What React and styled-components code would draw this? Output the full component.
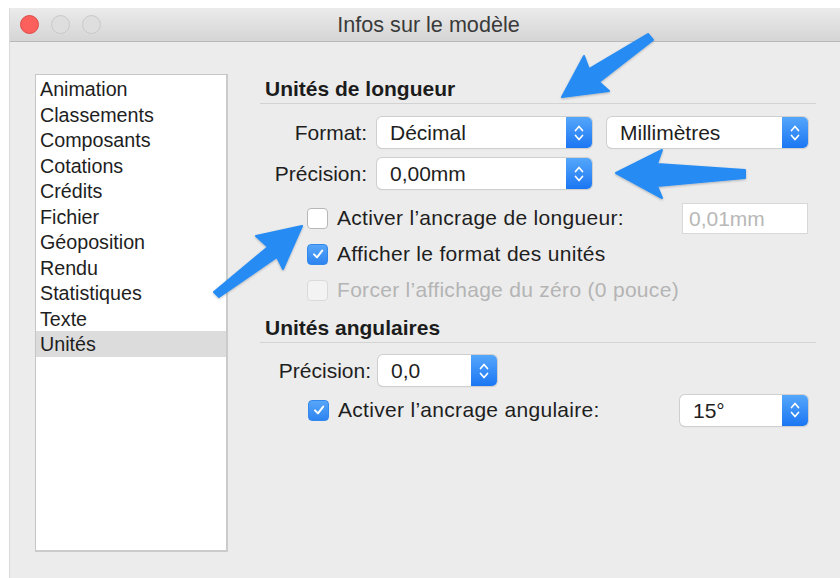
import React from "react";
import styled, { createGlobalStyle } from "styled-components";

const GlobalStyle = createGlobalStyle`
  html, body {
    margin: 0;
    padding: 0;
    background: #ffffff;
    overflow: hidden;
  }
  body {
    font-family: "Liberation Sans", Arial, sans-serif;
    color: #222;
  }
`;

const categories = [
  "Animation",
  "Classements",
  "Composants",
  "Cotations",
  "Crédits",
  "Fichier",
  "Géoposition",
  "Rendu",
  "Statistiques",
  "Texte",
  "Unités",
];

const Stepper = () => (
  <svg width="12" height="20" viewBox="0 0 12 20">
    <path d="M2.5 7.5 L6 3.5 L9.5 7.5" fill="none" stroke="#fff" strokeWidth="1.7" strokeLinecap="round" strokeLinejoin="round" />
    <path d="M2.5 12.5 L6 16.5 L9.5 12.5" fill="none" stroke="#fff" strokeWidth="1.7" strokeLinecap="round" strokeLinejoin="round" />
  </svg>
);

const Check = () => (
  <svg width="14" height="14" viewBox="0 0 14 14">
    <path d="M3 7.4 L6 10.4 L11.2 3.6" fill="none" stroke="#fff" strokeWidth="2" strokeLinecap="round" strokeLinejoin="round" />
  </svg>
);

const Popup = ({ value, width }) => (
  <PopupBox $width={width}>
    <PopupValue>{value}</PopupValue>
    <PopupArrows>
      <Stepper />
    </PopupArrows>
  </PopupBox>
);

const CheckRow = ({ label, checked, disabled, indent, children }) => (
  <CheckLine $indent={indent}>
    <Box $checked={checked} $disabled={disabled}>
      {checked && <Check />}
    </Box>
    <CheckLabel $disabled={disabled}>{label}</CheckLabel>
    {children}
  </CheckLine>
);

// blue callout arrows drawn over the dialog
const Callouts = () => (
  <Overlay viewBox="0 0 840 578">
    <defs>
      <filter id="soft" x="-20%" y="-20%" width="140%" height="140%">
        <feDropShadow dx="0" dy="1" stdDeviation="1.2" floodColor="#000" floodOpacity="0.25" />
      </filter>
    </defs>
    <g fill="#268cf4" stroke="#268cf4" strokeWidth="2" strokeLinejoin="round" filter="url(#soft)">
      <polygon points="562,97 584,56 589,69 648,34 653,40 599,82 609,91" />
      <polygon points="616,173 662,150 657,164 745,170 745,178 657,186 662,198" />
      <polygon points="302,226 256,236 268,247 214,292 219,297 277,257 283,269" />
    </g>
  </Overlay>
);

export default function App() {
  return (
    <>
      <GlobalStyle />
      <Page>
        <Window>
          <TitleBar>
            <Lights>
              <Light $color="#fc605c" $border="#df4a45" />
              <Light $color="#dedede" $border="#c9c9c9" />
              <Light $color="#dedede" $border="#c9c9c9" />
            </Lights>
            <Title>Infos sur le modèle</Title>
            <span />
          </TitleBar>

          <Content>
            <List>
              {categories.map((c) => (
                <ListItem key={c} $selected={c === "Unités"}>
                  {c}
                </ListItem>
              ))}
            </List>

            <Panel>
              <SectionTitle>Unités de longueur</SectionTitle>
              <FormRow $top={13}>
                <FieldLabel $width={107}>Format:</FieldLabel>
                <Popup value="Décimal" width={215} />
                <Gap $w={15} />
                <Popup value="Millimètres" width={201} />
              </FormRow>
              <FormRow $top={10}>
                <FieldLabel $width={107}>Précision:</FieldLabel>
                <Popup value="0,00mm" width={215} />
              </FormRow>

              <Checks $top={11}>
                <CheckRow label="Activer l’ancrage de longueur:" indent={47}>
                  <TextField>0,01mm</TextField>
                </CheckRow>
                <CheckRow label="Afficher le format des unités" checked indent={47} />
                <CheckRow label="Forcer l’affichage du zéro (0 pouce)" disabled indent={47} />
              </Checks>

              <SectionTitle $top={5}>Unités angulaires</SectionTitle>
              <FormRow $top={12}>
                <FieldLabel $width={111} $gap={7}>Précision:</FieldLabel>
                <Popup value="0,0" width={119} />
              </FormRow>
              <Checks $top={6}>
                <CheckRow label="Activer l’ancrage angulaire:" checked indent={48}>
                  <Spacer />
                  <Popup value="15°" width={128} />
                </CheckRow>
              </Checks>
            </Panel>
          </Content>
        </Window>
        <Callouts />
      </Page>
    </>
  );
}

const Page = styled.div`
  position: relative;
  width: 840px;
  height: 578px;
  padding: 8px 0 0 9px;
  box-sizing: border-box;
  overflow: hidden;
`;

const Window = styled.div`
  width: 860px;
  height: 600px;
  background: #ececec;
  border-left: 1px solid #d9d9d9;
  box-sizing: border-box;
`;

const TitleBar = styled.div`
  height: 33px;
  display: grid;
  grid-template-columns: 1fr auto 1fr;
  align-items: center;
  background: linear-gradient(#ebebeb, #d5d5d5);
  border-bottom: 1px solid #b9b9b9;
  border-top-left-radius: 6px;
`;

const Lights = styled.div`
  display: flex;
  gap: 12px;
  padding-left: 10px;
`;

const Light = styled.span`
  width: 19px;
  height: 19px;
  border-radius: 50%;
  background: ${(p) => p.$color};
  border: 1px solid ${(p) => p.$border};
  box-sizing: border-box;
`;

const Title = styled.div`
  font-size: 21.6px;
  color: #3a3a3a;
  margin-right: 22px;
`;

const Content = styled.div`
  display: flex;
  align-items: flex-start;
  padding: 32px 0 0 25px;
`;

const List = styled.div`
  width: 193px;
  height: 478px;
  background: #fff;
  border: 1px solid #c6c6c6;
  border-right: 2px solid #cbcbcb;
  border-bottom: 2px solid #cbcbcb;
  box-sizing: border-box;
  padding-top: 1px;
`;

const ListItem = styled.div`
  height: 25.5px;
  line-height: 26.5px;
  padding-left: 4px;
  font-size: 19.7px;
  color: #1e1e1e;
  background: ${(p) => (p.$selected ? "#dcdcdc" : "transparent")};
`;

const Panel = styled.div`
  margin-left: 32px;
  width: 556px;
  display: flex;
  flex-direction: column;
`;

const SectionTitle = styled.div`
  margin-top: ${(p) => p.$top || 0}px;
  height: 29px;
  line-height: 30px;
  padding-left: 5px;
  font-size: 21px;
  font-weight: bold;
  color: #1c1c1c;
  border-bottom: 1px solid #d3d3d3;
`;

const FormRow = styled.div`
  margin-top: ${(p) => p.$top}px;
  display: flex;
  align-items: center;
  height: 31px;
`;

const FieldLabel = styled.div`
  width: ${(p) => p.$width}px;
  margin-right: ${(p) => p.$gap || 10}px;
  text-align: right;
  font-size: 21px;
  color: #1e1e1e;
  white-space: nowrap;
`;

const Gap = styled.span`
  width: ${(p) => p.$w}px;
`;

const Spacer = styled.span`
  flex: 1;
`;

const PopupBox = styled.div`
  width: ${(p) => p.$width}px;
  height: 31px;
  display: flex;
  background: #fff;
  border-radius: 5px;
  box-shadow: 0 0 0 1px #cfcfcf, 0 1px 1px rgba(0, 0, 0, 0.18);
  overflow: hidden;
`;

const PopupValue = styled.div`
  flex: 1;
  padding-left: 13px;
  line-height: 32px;
  font-size: 21px;
  color: #1e1e1e;
`;

const PopupArrows = styled.div`
  width: 26px;
  display: flex;
  align-items: center;
  justify-content: center;
  background: linear-gradient(#55a7fb, #1b76f3);
`;

const Checks = styled.div`
  margin-top: ${(p) => p.$top}px;
  display: flex;
  flex-direction: column;
`;

const CheckLine = styled.div`
  height: 36px;
  display: flex;
  align-items: center;
  padding-left: ${(p) => p.$indent}px;
  padding-right: 8px;
`;

const Box = styled.span`
  width: 21px;
  height: 21px;
  border-radius: 4px;
  box-sizing: border-box;
  flex-shrink: 0;
  display: flex;
  align-items: center;
  justify-content: center;
  margin-right: 9px;
  background: ${(p) =>
    p.$checked ? "linear-gradient(#58a6f9, #2d84f0)" : p.$disabled ? "#f3f3f3" : "#fff"};
  border: 1px solid ${(p) => (p.$checked ? "#3388ec" : p.$disabled ? "#dadada" : "#b7b7b7")};
`;

const CheckLabel = styled.span`
  font-size: 21px;
  letter-spacing: 0.3px;
  color: ${(p) => (p.$disabled ? "#b4b4b4" : "#1e1e1e")};
  white-space: nowrap;
`;

const TextField = styled.div`
  margin-left: auto;
  width: 126px;
  height: 31px;
  box-sizing: border-box;
  background: #fff;
  border: 1px solid #d8d8d8;
  padding-left: 6px;
  line-height: 30px;
  font-size: 21px;
  color: #b8b8b8;
`;

const Overlay = styled.svg`
  position: absolute;
  left: 0;
  top: 0;
  width: 840px;
  height: 578px;
  pointer-events: none;
`;
